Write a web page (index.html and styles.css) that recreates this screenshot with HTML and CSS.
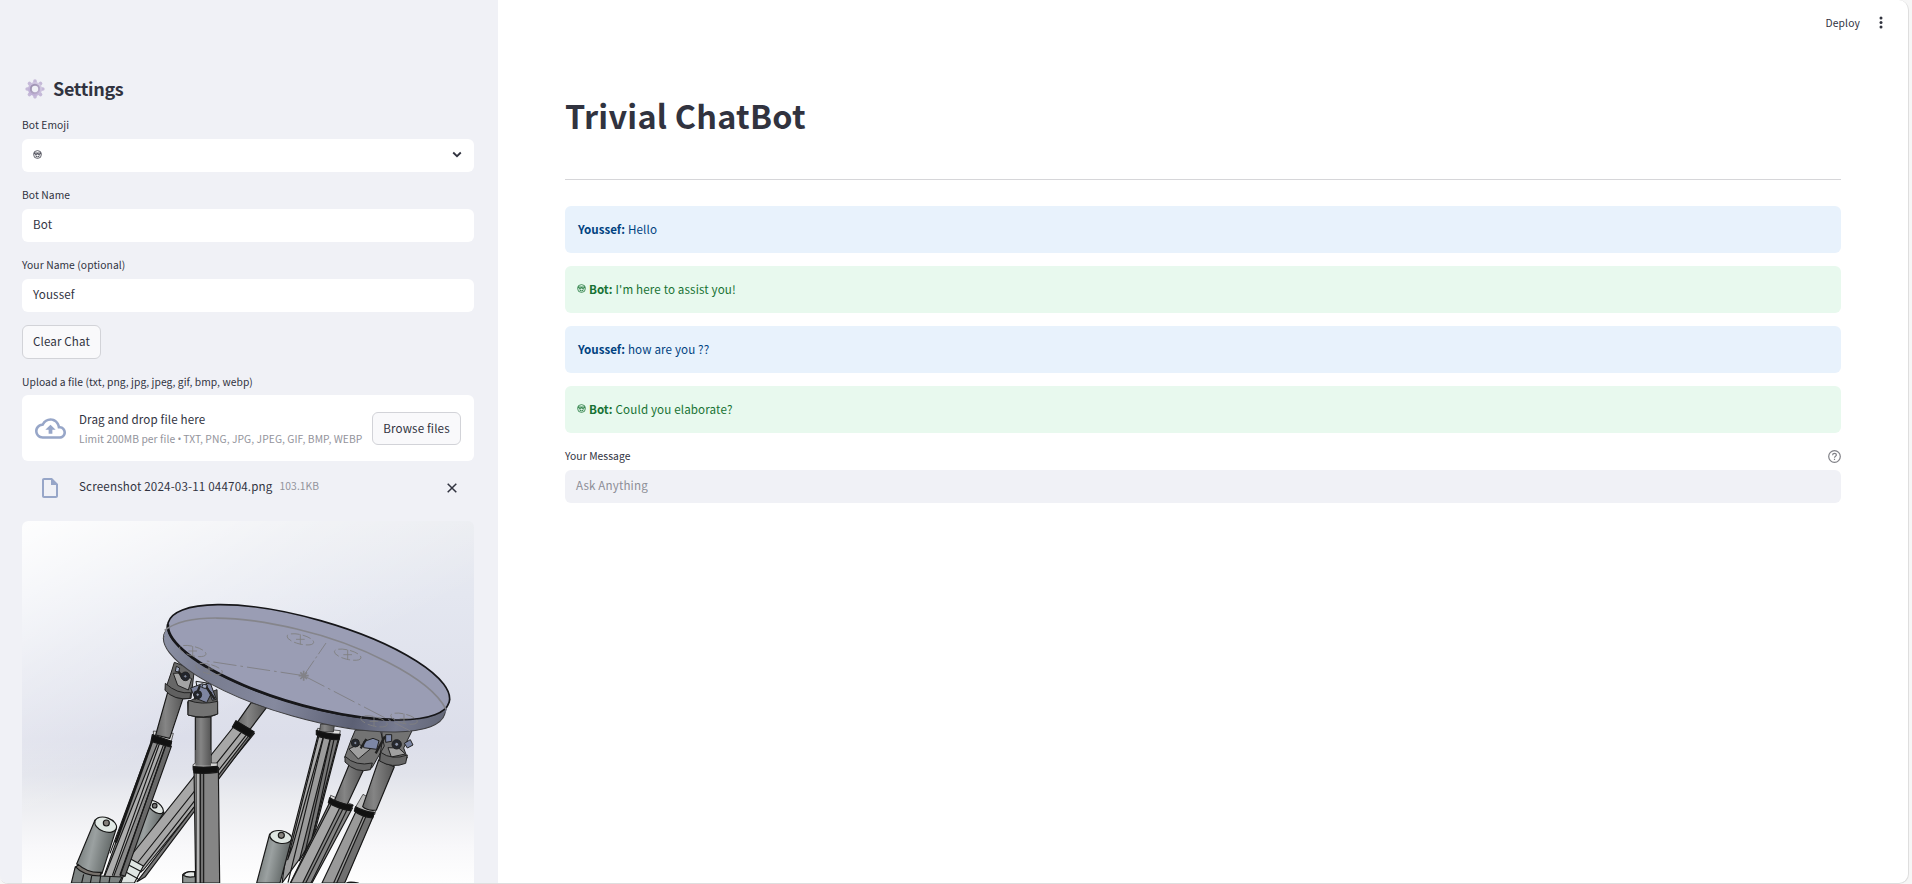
FILE: index.html
```html
<!DOCTYPE html>
<html lang="en">
<head>
<meta charset="utf-8">
<title>Trivial ChatBot</title>
<link rel="stylesheet" href="styles.css">
</head>
<body>
<svg class="defs" width="0" height="0" aria-hidden="true">
  <symbol id="face" viewBox="0 0 18 18">
    <g fill="none" stroke="currentColor">
      <circle cx="9" cy="9" r="7.8" stroke-width="1.5"/>
      <path d="M1.500 6.200h15M3.500 7q.4 3 2.600 3t2.500-3M9.600 7q.4 3 2.600 3t2.400-3" stroke-width="1.900"/>
      <path d="M5.200 12.400q3.800 2.600 7.600 0" stroke-width="1.600"/>
    </g>
  </symbol>
</svg>
<div class="app">
  <aside class="sidebar">
    <h2 class="settings">
      <svg class="gear" viewBox="0 0 60 60">
        <defs><linearGradient id="gearFill" x1="0" y1="1" x2="1" y2="0"><stop offset="0" stop-color="#b9a7d3"/><stop offset="1" stop-color="#d8d2e4"/></linearGradient>
        <linearGradient id="gearRing" x1="0" y1="0" x2="1" y2="1"><stop offset="0" stop-color="#9a8fae"/><stop offset="1" stop-color="#beb1d0"/></linearGradient></defs>
        <g stroke="#c5b9d8" stroke-width="11" stroke-linecap="round"><path d="M30 6.500v47M6.500 30h47M13.400 13.400l33.200 33.200M46.600 13.400l-33.200 33.200"/></g>
        <circle cx="30" cy="30" r="21" fill="url(#gearFill)"/>
        <circle cx="30" cy="30" r="12.500" fill="#f0f1f6" stroke="url(#gearRing)" stroke-width="6"/>
      </svg>
      <span>Settings</span>
    </h2>
    <div class="field">
      <label>Bot Emoji</label>
      <div class="input select">
        <svg class="face" width="9" height="9"><use href="#face"/></svg>
        <svg class="chevron" width="10" height="7" viewBox="0 0 10 7"><path d="M1.200 1.500 5 5.200l3.800-3.700" fill="none" stroke="#31333f" stroke-width="1.800"/></svg>
      </div>
    </div>
    <div class="field"><label>Bot Name</label><div class="input">Bot</div></div>
    <div class="field"><label>Your Name (optional)</label><div class="input">Youssef</div></div>
    <button class="btn clear">Clear Chat</button>
    <div class="field">
      <label>Upload a file (txt, png, jpg, jpeg, gif, bmp, webp)</label>
      <div class="dropzone">
        <svg class="cloud" width="31" height="21" viewBox="0 4 24 16"><path fill="#97a6c8" d="M19.350 10.040C18.670 6.590 15.640 4 12 4 9.110 4 6.600 5.640 5.350 8.040 2.340 8.360 0 10.910 0 14c0 3.310 2.690 6 6 6h13c2.760 0 5-2.240 5-5 0-2.640-2.050-4.780-4.650-4.960zM19 18H6c-2.210 0-4-1.790-4-4 0-2.050 1.530-3.760 3.560-3.970l1.070-.11.5-.95C8.080 7.140 9.940 6 12 6c2.620 0 4.880 1.860 5.390 4.430l.3 1.500 1.530.11c1.560.1 2.780 1.410 2.780 2.960 0 1.650-1.350 3-3 3zM8 13h2.550v3h2.900v-3H16l-4-4z"/></svg>
        <div class="drop-text"><span>Drag and drop file here</span><small>Limit 200MB per file <span class="bullet">•</span> TXT, PNG, JPG, JPEG, GIF, BMP, WEBP</small></div>
        <button class="btn browse">Browse files</button>
      </div>
    </div>
    <div class="file">
      <svg width="16" height="20" viewBox="4 2 16 20"><path fill="#97a6c8" d="M14 2H6c-1.100 0-1.990.9-1.990 2L4 20c0 1.100.89 2 1.990 2H18c1.100 0 2-.9 2-2V8l-6-6zM6 20V4h7v5h5v11H6z"/></svg>
      <span class="file-name">Screenshot 2024-03-11 044704.png</span>
      <small class="file-size">103.1KB</small>
      <svg class="close" width="10" height="10" viewBox="0 0 10 10"><path d="M.7.7l8.600 8.600M9.300.7.700 9.300" stroke="#31333f" stroke-width="1.500"/></svg>
    </div>
    <svg class="picture" viewBox="6 33 1356 1086" preserveAspectRatio="none">
      <defs>
        <linearGradient id="sky" x1="0" y1="0" x2="0" y2="1"><stop offset="0" stop-color="#e9ebf0"/><stop offset=".2" stop-color="#e4e7f0"/><stop offset=".6" stop-color="#dcdeea"/><stop offset=".7" stop-color="#e1e3eb"/><stop offset=".77" stop-color="#ebecf0"/><stop offset=".9" stop-color="#f8f8fa"/><stop offset="1" stop-color="#fefefe"/></linearGradient>
        <linearGradient id="glow" gradientUnits="userSpaceOnUse" x1="60" y1="33" x2="420" y2="720"><stop offset="0" stop-color="#fff" stop-opacity=".9"/><stop offset=".5" stop-color="#fff" stop-opacity=".38"/><stop offset="1" stop-color="#fff" stop-opacity="0"/></linearGradient>
        <linearGradient id="rim" gradientUnits="userSpaceOnUse" x1="430" y1="0" x2="1290" y2="0"><stop offset="0" stop-color="#8a8fa3"/><stop offset=".15" stop-color="#777b8e"/><stop offset=".42" stop-color="#85899e"/><stop offset=".7" stop-color="#5c6074"/><stop offset=".85" stop-color="#777b90"/><stop offset="1" stop-color="#646879"/></linearGradient>
        <linearGradient id="rod"><stop offset="0" stop-color="#656565"/><stop offset=".35" stop-color="#858585"/><stop offset="1" stop-color="#555"/></linearGradient>
        <linearGradient id="motor" x1="0" y1="0" x2="1" y2=".3"><stop offset="0" stop-color="#626867"/><stop offset=".5" stop-color="#9ba1a1"/><stop offset="1" stop-color="#5c6261"/></linearGradient>
        <g id="mark" fill="none" stroke="#808080" stroke-width="2.500"><path d="M-13 0h26M0-15v30"/><ellipse rx="41" ry="14" transform="rotate(14)" stroke-dasharray="26 9"/></g>
      </defs>
      <path fill="url(#sky)" d="M6 33h1356v1086H6z"/>
      <path fill="url(#glow)" d="M6 33h1356v1086H6z"/>

      <g stroke="#181818" stroke-width="3.500" stroke-linejoin="round">
        <!-- rear motor and diagonal leg -->
        <path fill="url(#motor)" d="M386 874l46 33-57 90-40 45z"/>
        <ellipse cx="407" cy="891" rx="27" ry="14" transform="rotate(38 407 891)" fill="#dfe5e2"/><circle cx="404" cy="887" r="7" fill="#777"/>
        <path fill="url(#rod)" d="M652 637l42-60 46 15-50 66z"/>
        <path fill="#a7a7a7" d="M645 645l58 25L370 1080l-58 38 20-80z"/>
        <path fill="#787878" d="M690 672l12-6-326 434-25 15z"/>
        <path fill="none" d="M663 668L352 1059M678 676L369 1070"/>
        <path fill="#111" d="M648 632l54 33-12 17-53-31z"/>
        <path fill="#dfe5e3" d="M320 1040l50 28-27 51h-46z"/><path fill="none" d="M316 1060l50 26M307 1080l48 27"/>

        <!-- left leg -->
        <path fill="#8c8c8c" d="M402 675l52 22-151 421h-58z"/>
        <path fill="#adadad" d="M414 697l17 6-157 415h-28z"/>
        <path fill="#686868" d="M438 705l16 4-139 390-15-5z"/>
        <path fill="none" stroke-width="8" d="M396 694L287 998"/>
        <path fill="none" d="M419 699L277 1097M436 707L300 1100M385 720L270 1030"/>
        <path fill="#ddd" stroke-width="2" d="M400 663l60 7-7 27-52-12z"/>
        <path fill="#111" d="M397 674l58 20-4 17-58-17z"/>
        <path fill="url(#rod)" d="M443 547l48 12-42 126-42-10z"/>
        <path fill="url(#motor)" d="M225 930l64 25-43 136q-45 8-76-29z"/>
        <ellipse cx="257" cy="944" rx="34" ry="21" transform="rotate(20 257 944)" fill="#e1e9e5"/><circle cx="259" cy="939" r="9" fill="#85827d"/>
        <path fill="#77726d" d="M174 1063q30 27 71 24l-6 12q-38 6-73-24z"/>
        <path fill="#7d8382" d="M166 1070q25 28 75 28l65 3-9 18H154z"/><path fill="none" d="M191 1093l-6 26M215 1098l-4 21M243 1089l-4 30M270 1100l-3 19"/>

        <!-- vertical leg -->
        <path fill="url(#rod)" d="M526 621h47v147h-47z"/>
        <path fill="#858585" d="M522 772h73l4 347h-72z"/>
        <path fill="#b4b4b4" stroke-width="2" d="M529 784h11v335h-11z"/><path fill="#727272" d="M541 785h10v334h-10z"/>
        <path fill="#d2d2d2" stroke-width="2" d="M519 764l8-5h65v19l-73 3z"/><path fill="url(#rod)" d="M526 720h47v47h-47z" stroke="none"/>
        <path fill="#111" d="M520 770q36 3 72-1v18q-34 5-70 2z"/>
        <path fill="#8d9391" d="M488 1119v-25q10-11 38-9v34z"/><path fill="#e3e7e5" d="M490 1096q8-14 34-10v14q-22 4-34-4z"/>

        <!-- right rear leg -->
        <path fill="#9b9b9b" d="M894 675l64 10-81 310-91 124 8-55z"/>
        <path fill="#777" d="M931 684l24 3-80 300-37 65z"/><path fill="#aaa" d="M896 680l13 3-91 325-15 41z"/>
        <path fill="none" d="M910 684L804 1118M931 688L835 1118M942 688L872 1010"/>
        <path fill="#ddd" stroke-width="2" d="M893 655l68 7-4 22-66-10z"/>
        <path fill="url(#rod)" stroke-width="2" d="M902 642h42l-4 24h-42z"/>
        <path fill="#111" d="M889 661q35 12 72 12l-4 16q-38 1-68-15z"/>
        <path fill="url(#motor)" d="M749 972l65 18-34 129h-70z"/>
        <ellipse cx="782" cy="981" rx="33" ry="19" transform="rotate(10 782 981)" fill="#dee6e2"/><circle cx="784" cy="976" r="9" fill="#85827d"/>

        <!-- right front legs -->
        <path fill="#858585" d="M930 875l67 20-121 224h-65z"/>
        <path fill="#a5a5a5" d="M934 882l26 10-112 227h-36z"/><path fill="none" d="M969 896L857 1119M981 899L873 1119"/>
        <path fill="#ddd" stroke-width="2" d="M932 856l68 29-7 16-65-20z"/>
        <path fill="url(#rod)" d="M987 765l43 16-49 104-38-13z"/>
        <path fill="#111" d="M929 863q31 20 69 22l-7 17q-36-5-66-24z"/>
        <path fill="#999" d="M1010 900l50 14-88 205h-66z"/><path fill="#707070" d="M1040 914l20 4-86 201h-24z"/><path fill="none" d="M1032 914L941 1119"/>
        <path fill="#bbb" stroke-width="2" d="M1029 853l45 25-10 36-60-18z"/>
        <path fill="url(#rod)" d="M1076 750l47 20-54 130q-26 4-41-10z"/>
        <path fill="#111" d="M1007 890q26 15 56 17l-5 17q-35-4-55-21z"/>
        <path fill="#aaa" d="M980 1119q8-6 35 0z"/>
      </g>

      <!-- joints below the plate -->
      <g stroke="#222" stroke-width="3" stroke-linejoin="round">
        <path fill="#676767" d="M463 457l60 22-10 86q-43 9-77-26l17-50z"/>
        <path fill="#a4a4a4" d="M460 490l13 36 32 14 10-34-35-17z"/>
        <path fill="#606060" d="M436 520q36 33 76 28l-2 17q-47 7-75-24z"/>
        <path fill="#5e5e5e" d="M503 575l88-36 2 73q-36 19-89 3z"/>
        <path fill="#737373" d="M505 571q40 15 88 3v38q-40 16-89 3z"/>
        <path fill="#dce0e9" d="M528 514l40 6-4 20-32-2z"/>
        <path fill="#7d84a0" d="M512 534l35-13 28 27-15 30-35-14zM558 520l14 2 17 46-12 3z"/>
        <path fill="none" stroke-width="7" d="M473 480l15 25M540 526l-16 42M553 523l31 44"/>
        <circle cx="496" cy="499" r="13" fill="#22262e"/><circle cx="496" cy="499" r="5" fill="#7e879c"/>
        <circle cx="533" cy="554" r="12" fill="#22262e"/><circle cx="533" cy="554" r="5" fill="#929bb2"/>
        <path fill="#a2abc4" d="M469 469l10 5-3 12-10-2zM550 522l12 4-5 10-12-4z"/>
        <path fill="#737373" d="M1006 660h75l12 48-37 65q-43 21-82-31l20-54zM1085 656h94l-28 58 11 30q-33 39-85 7l10-56z"/>
        <path fill="#a0a0a0" d="M987 717l28 30 37-31-37-13zM1104 713l10 28 42-9-20-18z"/>
        <path fill="#666" d="M975 739q32 31 82 20l-6 20q-43 12-76-23zM1082 727q34 25 80 8l-5 25q-40 16-78-7z"/>
        <path fill="#7d87a5" d="M1031 695l28-10 18 7-7 26-39-5zM1097 674h18v20l-18 3zM1153 700l18-11 8 16-17 9z"/>
        <path fill="none" stroke-width="7" d="M1022 715l17-28M1067 730l28-51"/>
        <circle cx="1006" cy="699" r="12" fill="#242830"/><circle cx="1006" cy="699" r="5" fill="#7e879c"/>
        <circle cx="1130" cy="703" r="14" fill="#242830"/><circle cx="1130" cy="703" r="6" fill="#8992a9"/>
      </g>

      <!-- plate -->
      <ellipse cx="853" cy="493" rx="438" ry="130" transform="rotate(15.850 853 493)" fill="url(#rim)" stroke="#3e3e40" stroke-width="3"/>
      <path d="M430 385l13-40M1277 602l13-34" stroke="#555" stroke-width="3"/>
      <path d="M431 378l13-32 845 222-12 40z" fill="url(#rim)"/>
      <g transform="rotate(15.850 866 457)">
        <ellipse cx="866" cy="457" rx="438" ry="130" fill="#9a9db4" stroke="#161619" stroke-width="5"/>
        <path d="M429 463A438 130 0 0 0 1160 553" fill="none" stroke="#17171a" stroke-width="8"/>
      </g>
      <path d="M434 361C500 310 650 315 830 357S1230 500 1278 598" fill="none" stroke="#85858b" stroke-width="5"/>
      <g fill="none" stroke="#828288" stroke-width="3">
        <path d="M851 497l67-98" stroke-dasharray="55 8 7 8"/><path d="M851 497L560 453" stroke-dasharray="70 12 8 12"/><path d="M851 497l320 166" stroke-dasharray="70 12 8 12"/>
        <path d="M836 497h30M851 482v30M841 487l20 20M861 487l-20 20" stroke-width="5"/>
      </g>
      <use href="#mark" x="841" y="388"/><use href="#mark" x="983" y="434"/><use href="#mark" x="518" y="423"/><use href="#mark" x="567" y="477"/><use href="#mark" x="1062" y="634"/><use href="#mark" x="1152" y="626"/>
    </svg>
  </aside>

  <main class="main">
    <header class="toolbar"><span>Deploy</span>
      <svg width="4" height="13" viewBox="0 0 4 13" fill="#31333f"><circle cx="2" cy="2" r="1.500"/><circle cx="2" cy="6.500" r="1.500"/><circle cx="2" cy="11" r="1.500"/></svg>
    </header>
    <section class="content">
      <h1>Trivial ChatBot</h1>
      <hr>
      <div class="chat">
        <p class="msg user"><b>Youssef:</b><span>Hello</span></p>
        <p class="msg bot"><svg width="9" height="9"><use href="#face"/></svg><b>Bot:</b><span>I'm here to assist you!</span></p>
        <p class="msg user"><b>Youssef:</b><span>how are you ??</span></p>
        <p class="msg bot"><svg width="9" height="9"><use href="#face"/></svg><b>Bot:</b><span>Could you elaborate?</span></p>
      </div>
      <div class="ask-label"><label>Your Message</label>
        <svg width="13" height="13" viewBox="0 0 13 13" fill="none" stroke="#808187" stroke-width="1.200"><circle cx="6.500" cy="6.500" r="5.800"/><path d="M4.600 5.200q0-1.800 1.900-1.800t1.900 1.600c0 1.200-1.900 1.200-1.900 2.700M6.500 8.700v1.300"/></svg>
      </div>
      <div class="input ask">Ask Anything</div>
    </section>
  </main>
</div>
</body>
</html>
```
FILE: styles.css
```css
* { box-sizing: border-box; }
body {
  margin: 0;
  height: 884px;
  overflow: hidden;
  background: #f6f6f6;
  color: #31333f;
  font: 11.6px/20px "Noto Sans CJK SC", "Open Sans", sans-serif;
  letter-spacing: .14px;
}
h1, h2, p { margin: 0; }
svg { display: block; flex: none; }
.defs { position: absolute; }
.app {
  display: flex;
  width: 1909px;
  height: 884px;
  overflow: hidden;
  background: #fff;
  border-right: 1px solid #dedede;
  border-bottom: 1px solid #dedede;
  border-radius: 0 10px 10px 8px;
}
.sidebar {
  flex: none;
  width: 498px;
  padding: 76px 24px 0 22px;
  background: #f0f1f6;
  overflow: hidden;
}
.settings {
  display: flex;
  align-items: center;
  gap: 8px;
  height: 26px;
  padding-left: 3px;
  font-size: 18px;
  font-weight: 600;
  letter-spacing: -.3px;
}
.settings span { padding-bottom: 2px; }
.gear { width: 20px; height: 20px; }
label {
  display: block;
  height: 20px;
  font-size: 10.3px;
  letter-spacing: .07px;
  white-space: nowrap;
}
.field label { height: 24px; }
.field + .field { padding-top: 13px; }
.settings + .field { padding-top: 13px; }
.input {
  display: flex;
  align-items: center;
  height: 33px;
  padding: 0 11px 3px;
  border-radius: 6px;
  background: #fff;
}
.select { justify-content: space-between; }
.face { color: #31333f; margin-top: 1px; }
.chevron { margin: 1px 1px 0 0; }
.btn {
  display: flex;
  align-items: center;
  justify-content: center;
  flex: none;
  padding: 0 0 1px;
  border: 1px solid #d2d3d8;
  border-radius: 6px;
  background: #f9f9fb;
  color: inherit;
  font: inherit;
  letter-spacing: inherit;
}
.clear { width: 79px; height: 34px; margin-top: 13px; padding-bottom: 2px; }
.clear + .field { padding-top: 13px; }
.clear + .field label { height: 23px; }
.dropzone {
  display: flex;
  align-items: center;
  height: 66px;
  padding: 0 13px;
  border-radius: 6px;
  background: #fff;
}
.drop-text {
  display: flex;
  flex-direction: column;
  flex: 1;
  margin-left: 13px;
  padding-top: 2px;
  white-space: nowrap;
}
small { font-size: 10.3px; letter-spacing: .07px; color: #93949c; }
.bullet { font-family: "Open Sans", sans-serif; letter-spacing: -.5px; }
.browse { width: 89px; height: 33px; }
.file {
  display: flex;
  align-items: center;
  height: 60px;
  padding: 0 17px 6px 20px;
}
.file-name, .file-size { padding-bottom: 5px; }
.file-name { margin: 0 7px 0 21px; letter-spacing: .17px; }
.close { margin: 0 0 1px auto; }
.picture { width: 452px; height: 362px; border-radius: 6px 6px 0 0; }

.main { flex: 1; }
.toolbar {
  display: flex;
  justify-content: flex-end;
  align-items: center;
  gap: 19px;
  height: 45px;
  padding-right: 25px;
  font-size: 10.3px;
}
.content { padding: 0 67px; }
h1 {
  height: 134px;
  padding-top: 48px;
  font-size: 32.4px;
  line-height: 44px;
  font-weight: 700;
  letter-spacing: .25px;
}
hr { height: 1px; margin: 0 0 26px; border: 0; background: #d6d6d9; }
.chat { display: grid; gap: 13px; }
.msg {
  display: flex;
  align-items: center;
  gap: 3px;
  height: 47px;
  padding: 0 13px 2px;
  border-radius: 6px;
}
.msg b { letter-spacing: 0; }
.user { background: #e8f2fc; color: #004280; }
.bot { background: #e8f9ee; color: #177233; padding-left: 12px; }
.ask-label {
  display: flex;
  justify-content: space-between;
  align-items: center;
  height: 37px;
  padding-top: 10px;
}
.ask-label label { height: 22px; }
.ask { background: #f0f1f6; color: #8d8e97; }
```
